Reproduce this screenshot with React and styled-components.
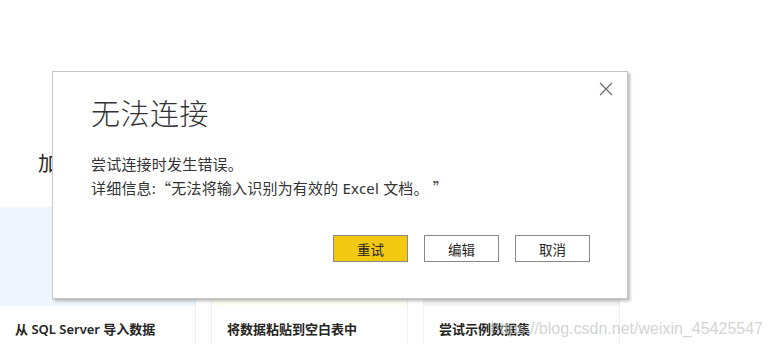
import React from 'react';
import styled, { createGlobalStyle } from 'styled-components';

const GlobalStyle = createGlobalStyle`
  html, body {
    margin: 0;
    padding: 0;
    background: #fff;
  }
  body {
    font-family: "Noto Sans", "Noto Sans CJK SC", sans-serif;
    color: #252423;
  }
`;

const Page = styled.div`
  position: relative;
  width: 769px;
  height: 344px;
  overflow: hidden;
  background: #fff;
`;

const Heading = styled.h2`
  margin: 0 0 31px;
  padding: 150px 0 0 38px;
  font-family: "Noto Sans CJK SC", sans-serif;
  font-size: 20px;
  font-weight: 400;
  line-height: 26px;
  color: #252423;
`;

const CardRow = styled.div`
  display: flex;
  gap: 15px;
  margin-left: -1px;
`;

const Card = styled.div`
  width: 197px;
  height: 140px;
  flex-shrink: 0;
  box-sizing: border-box;
  border: 1px solid #eeeeee;
  border-top: none;
  display: flex;
  flex-direction: column;
`;

const CardArt = styled.div`
  height: 99px;
  background: ${p => p.tint};
`;

const CardLabel = styled.div`
  padding: 13px 0 0 15px;
  font-size: 13px;
  font-weight: 600;
  color: #252423;
  line-height: 20px;
  white-space: nowrap;
`;

const Watermark = styled.div`
  position: absolute;
  right: 6px;
  top: 318px;
  font-family: "Liberation Sans", Arial, sans-serif;
  font-size: 16px;
  line-height: 22px;
  color: rgba(200, 200, 200, 0.8);
  white-space: nowrap;
`;

const Dialog = styled.div`
  position: absolute;
  left: 52px;
  top: 71px;
  width: 576px;
  height: 228px;
  box-sizing: border-box;
  background: #fff;
  border: 1px solid #c8c8c8;
  box-shadow: 2px 2px 3px rgba(0, 0, 0, 0.28);
  padding: 20px 37px 0 38px;
  display: flex;
  flex-direction: column;
`;

const CloseButton = styled.button`
  position: absolute;
  right: 13px;
  top: 9px;
  width: 16px;
  height: 16px;
  padding: 0;
  border: none;
  background: none;
  cursor: pointer;
  svg {
    display: block;
  }
`;

const Title = styled.h1`
  margin: 0;
  font-family: "Noto Sans CJK SC", sans-serif;
  font-size: 29px;
  font-weight: 300;
  line-height: 40px;
  color: #333;
  letter-spacing: 0.5px;
`;

const Message = styled.div`
  margin-top: 20px;
  font-size: 15px;
  line-height: 24px;
  letter-spacing: 0.2px;
  color: #333;
`;

const Quote = styled.span`
  font-family: "Noto Sans CJK SC", sans-serif;
`;

const Actions = styled.div`
  margin-top: auto;
  margin-bottom: 36px;
  display: flex;
  justify-content: flex-end;
  gap: 16px;
`;

const Button = styled.button`
  width: 75px;
  height: 27px;
  box-sizing: border-box;
  border: 1px solid #8a8886;
  background: ${p => (p.$primary ? '#f2c811' : '#fff')};
  color: #252423;
  font-family: "Noto Sans CJK SC", sans-serif;
  font-size: 13.5px;
  padding: 0;
  cursor: pointer;
`;

const cards = [
  { tint: '#eef5fc', label: '从 SQL Server 导入数据' },
  { tint: '#fdfdf2', label: '将数据粘贴到空白表中' },
  { tint: '#f3f3f3', label: '尝试示例数据集' },
];

export default function App() {
  return (
    <Page>
      <GlobalStyle />
      <Heading>加载数据</Heading>
      <CardRow>
        {cards.map(c => (
          <Card key={c.label}>
            <CardArt tint={c.tint} />
            <CardLabel>{c.label}</CardLabel>
          </Card>
        ))}
      </CardRow>
      <Watermark>https://blog.csdn.net/weixin_45425547</Watermark>

      <Dialog>
        <CloseButton aria-label="关闭">
          <svg width="16" height="16" viewBox="0 0 16 16">
            <path d="M2 2 L14 14 M14 2 L2 14" stroke="#666" strokeWidth="1.1" fill="none" />
          </svg>
        </CloseButton>
        <Title>无法连接</Title>
        <Message>
          尝试连接时发生错误。
          <br />
          详细信息:<Quote>“</Quote>无法将输入识别为有效的 Excel 文档。 <Quote>”</Quote>
        </Message>
        <Actions>
          <Button $primary>重试</Button>
          <Button>编辑</Button>
          <Button>取消</Button>
        </Actions>
      </Dialog>
    </Page>
  );
}
